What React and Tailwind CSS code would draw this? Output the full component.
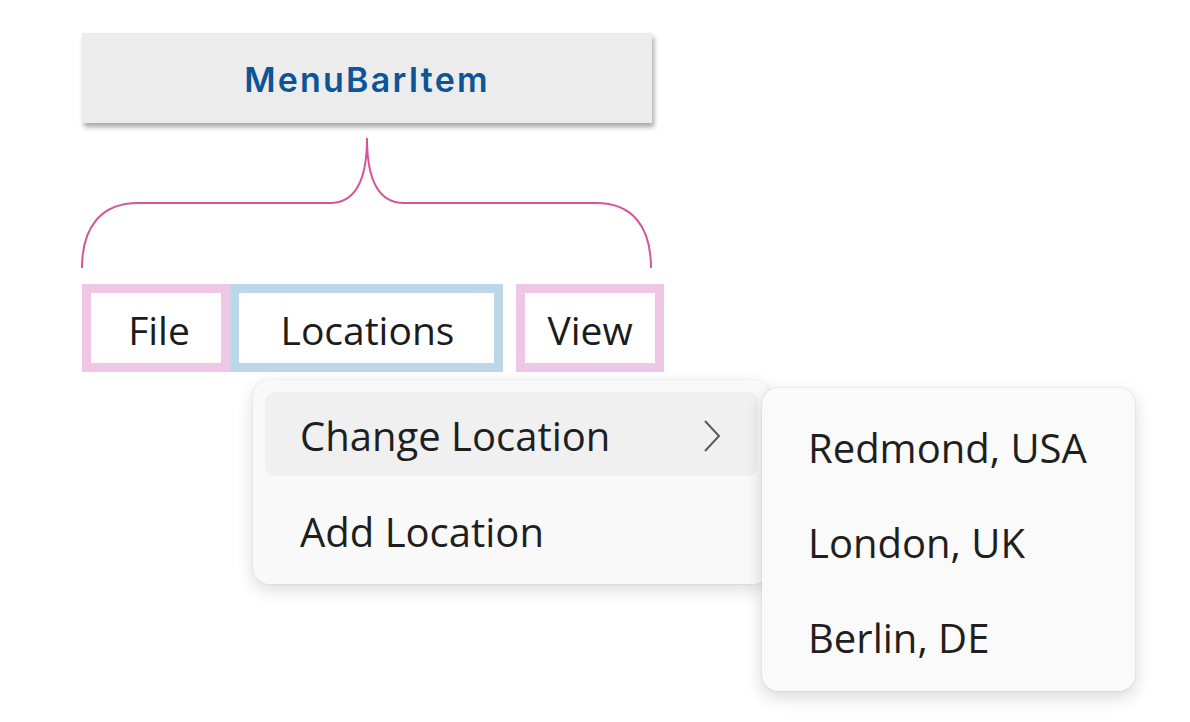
import React from "react";

const menuFont = { fontFamily: '"Open Sans", "Noto Sans", sans-serif' };

function Brace() {
  return (
    <svg width="574" height="136" viewBox="80 136 574 136" className="block">
      <path
        d="M82 268 C82 226 102 203 138 203 L330 203 C352 203 367 186 367 138 C367 186 382 203 404 203 L596 203 C632 203 651 226 651 268"
        fill="none"
        stroke="#d6559a"
        strokeWidth="2"
      />
    </svg>
  );
}

function BarItem({ label, tone, width, shift }) {
  const border =
    tone === "pink" ? "border-[#efc6e6]" : "border-[#bed6ea]";
  return (
    <div
      className={`flex h-[88px] items-center justify-center border-[9px] ${border} bg-white pt-[4px] text-[39px] text-[#1c1c1c] ${width} ${shift}`}
      style={menuFont}
    >
      {label}
    </div>
  );
}

function Chevron() {
  return (
    <svg width="20" height="34" viewBox="0 0 20 34" className="block">
      <path d="M3 2 L17 17 L3 32" fill="none" stroke="#5a5a5a" strokeWidth="2" />
    </svg>
  );
}

export default function App() {
  return (
    <div className="min-h-[722px] w-[1190px] bg-white" style={menuFont}>
      <div className="flex flex-col pl-[82px] pt-[33px]">
        <div className="flex h-[90px] w-[570px] items-center justify-center bg-[#ececec] shadow-[2px_4px_5px_rgba(0,0,0,0.35)]">
          <span
            className="pt-[2px] text-[34px] font-semibold tracking-[2.2px] text-[#0e5597]"
            style={{ fontFamily: 'Inter, "Noto Sans", sans-serif' }}
          >
            MenuBarItem
          </span>
        </div>

        <div className="-ml-[2px] mt-[13px]">
          <Brace />
        </div>

        <div className="mt-[12px] flex items-start">
          <BarItem label="File" tone="pink" width="w-[148px]" shift="pl-[6px]" />
          <BarItem label="Locations" tone="blue" width="w-[273px]" shift="pl-[2px]" />
          <div className="w-[13px]" />
          <BarItem label="View" tone="pink" width="w-[148px]" shift="" />
        </div>

        <div className="ml-[171px] mt-[8px] flex items-start">
          <div className="relative z-0 flex w-[517px] flex-col gap-[12px] rounded-[16px] bg-[#f9f9f9] p-[12px] shadow-[0_6px_18px_rgba(0,0,0,0.14),0_0_2px_rgba(0,0,0,0.12)]">
            <div className="flex h-[84px] items-center justify-between rounded-[10px] bg-[#f0f0f0] pl-[35px] pr-[36px] pt-[3px] text-[40px] text-[#1f1f1f]">
              <span>Change Location</span>
              <Chevron />
            </div>
            <div className="flex h-[84px] items-center pl-[35px] pt-[3px] text-[40px] text-[#1f1f1f]">
              Add Location
            </div>
          </div>

          <div className="relative z-10 -ml-[8px] mt-[8px] flex w-[373px] flex-col rounded-[16px] bg-[#fafafa] pb-[6px] pt-[12px] shadow-[0_6px_18px_rgba(0,0,0,0.16),0_0_2px_rgba(0,0,0,0.14)]">
            {["Redmond, USA", "London, UK", "Berlin, DE"].map((city) => (
              <div
                key={city}
                className="flex h-[95px] items-center pl-[46px] text-[40px] text-[#1f1f1f]"
              >
                {city}
              </div>
            ))}
          </div>
        </div>
      </div>
    </div>
  );
}
